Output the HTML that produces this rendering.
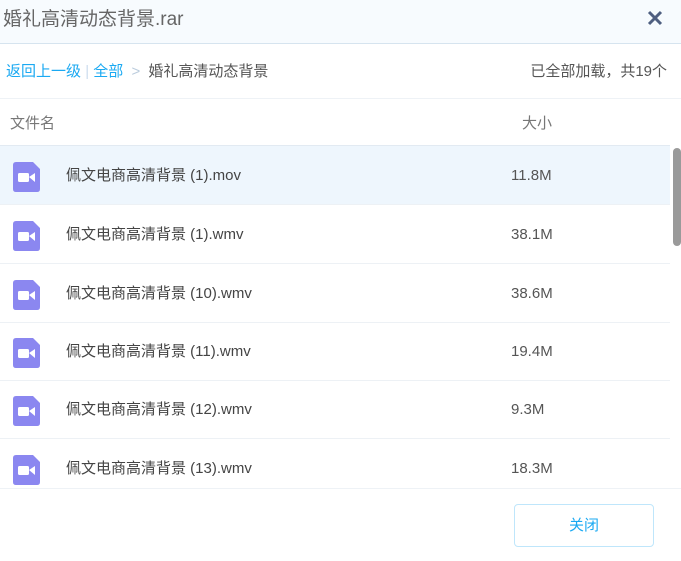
<!DOCTYPE html>
<html><head><meta charset="utf-8"><style>
*{margin:0;padding:0;box-sizing:border-box}
body{width:681px;height:561px;overflow:hidden;background:#fff;font-family:"Liberation Sans","Noto Sans CJK SC",sans-serif;position:relative}
.hd{position:absolute;left:0;top:0;width:681px;height:44px;background:#f7fbfe;border-bottom:1px solid #d6e4ef}
.hd .t{position:absolute;left:3px;top:4px;font-size:19px;color:#666}
.x{position:absolute;left:646px;top:9px;width:18px;height:18px}
.bc{position:absolute;top:60px;font-size:15px;color:#555}
.line{position:absolute;left:0;height:1px;background:#eef2f6}
.th{position:absolute;top:112px;font-size:15px;color:#777}
.row{position:absolute;left:0;width:670px;height:59px;border-bottom:1px solid #edf1f5}
.row .ic{position:absolute;left:13px;top:16px}
.row .n{position:absolute;left:66px;top:18px;font-size:15px;color:#444}
.row .s{position:absolute;left:511px;top:21px;font-size:15px;color:#555}
.btn{position:absolute;left:514px;top:504px;width:140px;height:43px;border:1px solid #bfe6fb;border-radius:4px;color:#1aa9f2;font-size:15px;text-align:center;line-height:41px}
.sb{position:absolute;left:673px;top:148px;width:8px;height:98px;background:#9a9a9a;border-radius:4px}
</style></head><body>
<div class="hd"><div class="t">婚礼高清动态背景.rar</div>
<svg class="x" viewBox="0 0 18 18"><path d="M3 3L15 15M15 3L3 15" stroke="#4f5f80" stroke-width="3"/></svg></div>
<div class="bc" style="left:6px"><span style="color:#1aa9f2">返回上一级</span> <span style="color:#cde">|</span> <span style="color:#1aa9f2">全部</span> <span style="color:#bcd;margin:0 4px">&gt;</span> 婚礼高清动态背景</div>
<div class="bc" style="right:14px;color:#555">已全部加载，共19个</div>
<div class="line" style="top:98px;width:681px"></div>
<div class="th" style="left:10px">文件名</div>
<div class="th" style="left:522px">大小</div>
<div class="line" style="top:145px;width:670px;background:#e2eaf2"></div>
<div class="row" style="top:146px;background:#eef6fd"><svg class="ic" width="27" height="30" viewBox="0 0 27 30"><path d="M3 0H20L27 7V27Q27 30 24 30H3Q0 30 0 27V3Q0 0 3 0Z" fill="#8b87f0"/><rect x="5" y="11" width="11" height="9" rx="1.5" fill="#fff"/><path d="M16 15L22 11V20Z" fill="#fff"/></svg><div class="n">佩文电商高清背景 (1).mov</div><div class="s">11.8M</div></div>
<div class="row" style="top:205px"><svg class="ic" width="27" height="30" viewBox="0 0 27 30"><path d="M3 0H20L27 7V27Q27 30 24 30H3Q0 30 0 27V3Q0 0 3 0Z" fill="#8b87f0"/><rect x="5" y="11" width="11" height="9" rx="1.5" fill="#fff"/><path d="M16 15L22 11V20Z" fill="#fff"/></svg><div class="n">佩文电商高清背景 (1).wmv</div><div class="s">38.1M</div></div>
<div class="row" style="top:264px"><svg class="ic" width="27" height="30" viewBox="0 0 27 30"><path d="M3 0H20L27 7V27Q27 30 24 30H3Q0 30 0 27V3Q0 0 3 0Z" fill="#8b87f0"/><rect x="5" y="11" width="11" height="9" rx="1.5" fill="#fff"/><path d="M16 15L22 11V20Z" fill="#fff"/></svg><div class="n">佩文电商高清背景 (10).wmv</div><div class="s">38.6M</div></div>
<div class="row" style="top:322px"><svg class="ic" width="27" height="30" viewBox="0 0 27 30"><path d="M3 0H20L27 7V27Q27 30 24 30H3Q0 30 0 27V3Q0 0 3 0Z" fill="#8b87f0"/><rect x="5" y="11" width="11" height="9" rx="1.5" fill="#fff"/><path d="M16 15L22 11V20Z" fill="#fff"/></svg><div class="n">佩文电商高清背景 (11).wmv</div><div class="s">19.4M</div></div>
<div class="row" style="top:380px"><svg class="ic" width="27" height="30" viewBox="0 0 27 30"><path d="M3 0H20L27 7V27Q27 30 24 30H3Q0 30 0 27V3Q0 0 3 0Z" fill="#8b87f0"/><rect x="5" y="11" width="11" height="9" rx="1.5" fill="#fff"/><path d="M16 15L22 11V20Z" fill="#fff"/></svg><div class="n">佩文电商高清背景 (12).wmv</div><div class="s">9.3M</div></div>
<div class="row" style="top:439px;border-bottom:none"><svg class="ic" width="27" height="30" viewBox="0 0 27 30"><path d="M3 0H20L27 7V27Q27 30 24 30H3Q0 30 0 27V3Q0 0 3 0Z" fill="#8b87f0"/><rect x="5" y="11" width="11" height="9" rx="1.5" fill="#fff"/><path d="M16 15L22 11V20Z" fill="#fff"/></svg><div class="n">佩文电商高清背景 (13).wmv</div><div class="s">18.3M</div></div>
<div class="line" style="top:488px;width:681px"></div>
<div class="sb"></div>
<div class="btn">关闭</div>
</body></html>
